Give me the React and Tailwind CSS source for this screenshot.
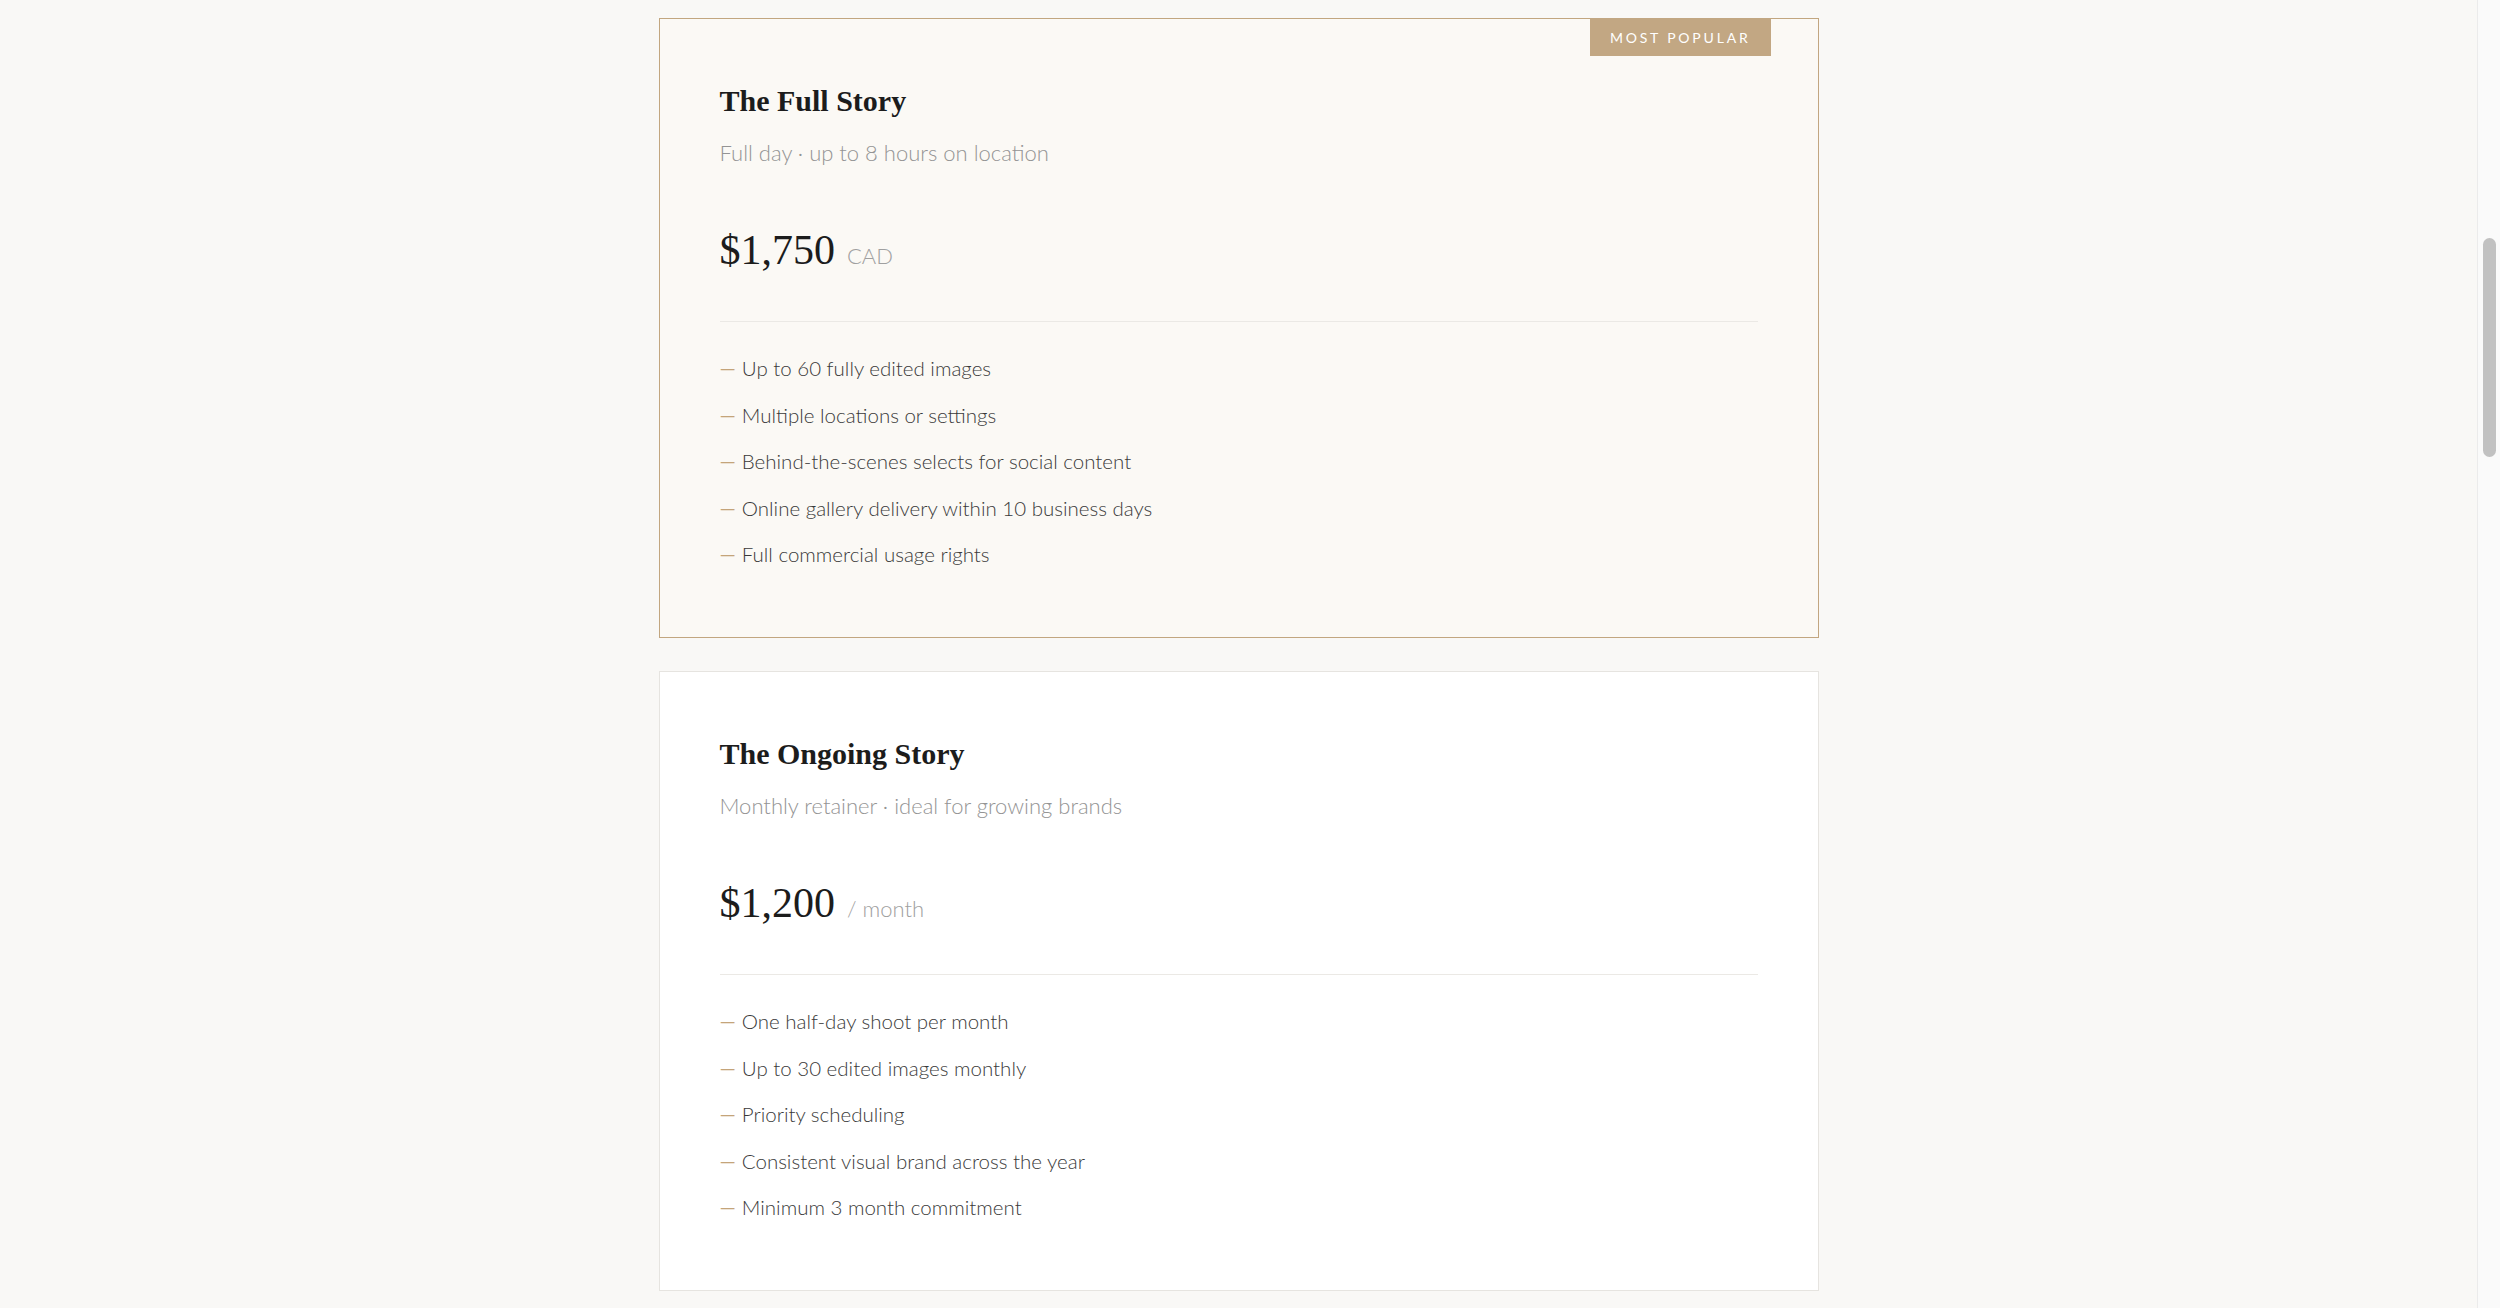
import React from 'react';

const packages = [
  {
    name: 'The Full Story',
    subtitle: 'Full day · up to 8 hours on location',
    price: '$1,750',
    suffix: 'CAD',
    featured: true,
    items: [
      'Up to 60 fully edited images',
      'Multiple locations or settings',
      'Behind-the-scenes selects for social content',
      'Online gallery delivery within 10 business days',
      'Full commercial usage rights'
    ]
  },
  {
    name: 'The Ongoing Story',
    subtitle: 'Monthly retainer · ideal for growing brands',
    price: '$1,200',
    suffix: '/ month',
    featured: false,
    items: [
      'One half-day shoot per month',
      'Up to 30 edited images monthly',
      'Priority scheduling',
      'Consistent visual brand across the year',
      'Minimum 3 month commitment'
    ]
  }
];

function PackageCard({ pkg }) {
  return (
    <div
      className={
        pkg.featured
          ? 'relative border border-[#c2a680] bg-[#fbf9f5] pt-[62px] px-[60px] pb-[69px]'
          : 'relative border border-[#e6e4e0] bg-white pt-[62px] px-[60px] pb-[69px]'
      }
    >
      {pkg.featured && (
        <span className="absolute top-[-1px] right-[47px] bg-[#c2a783] px-5 h-[38px] flex items-center text-[14px] tracking-[0.2em] text-white">
          MOST POPULAR
        </span>
      )}

      <h2 className="font-['Liberation_Serif',serif] font-semibold text-[30px] leading-[40px] text-[#1c1c1c]">
        {pkg.name}
      </h2>
      <p className="mt-[18px] text-[22px] leading-[28px] text-[#949494] font-light">
        {pkg.subtitle}
      </p>

      <div className="mt-[59px] flex items-baseline gap-[12px] h-[48px]">
        <span className="font-['Liberation_Serif',serif] text-[42px] leading-[48px] text-[#1c1c1c]">
          {pkg.price}
        </span>
        <span className="text-[22px] text-[#a0a0a0] font-light">{pkg.suffix}</span>
      </div>

      <div className="mt-[47px] h-px bg-[#ebe9e5]" />

      <ul className="mt-[32px] flex flex-col gap-[18.5px]">
        {pkg.items.map((item) => (
          <li key={item} className="text-[20.5px] leading-[28px] text-[#3a3a3a] font-light">
            <span className="text-[#c4a47a] font-normal mr-[6px]">—</span>
            {item}
          </li>
        ))}
      </ul>
    </div>
  );
}

export default function App() {
  return (
    <div className="h-screen flex bg-[#f9f8f6] font-['Lato',sans-serif]">
      <main className="flex-1 overflow-hidden">
        <div className="mx-auto w-[1160px] pt-[18px] pb-[18px] flex flex-col gap-[33px]">
          {packages.map((pkg) => (
            <PackageCard key={pkg.name} pkg={pkg} />
          ))}
        </div>
      </main>
      <aside className="w-[23px] border-l border-[#ebebeb] bg-[#fafafa] flex justify-center">
        <div className="mt-[238px] w-[13px] h-[219px] rounded-full bg-[#c1c1c1]" />
      </aside>
    </div>
  );
}
